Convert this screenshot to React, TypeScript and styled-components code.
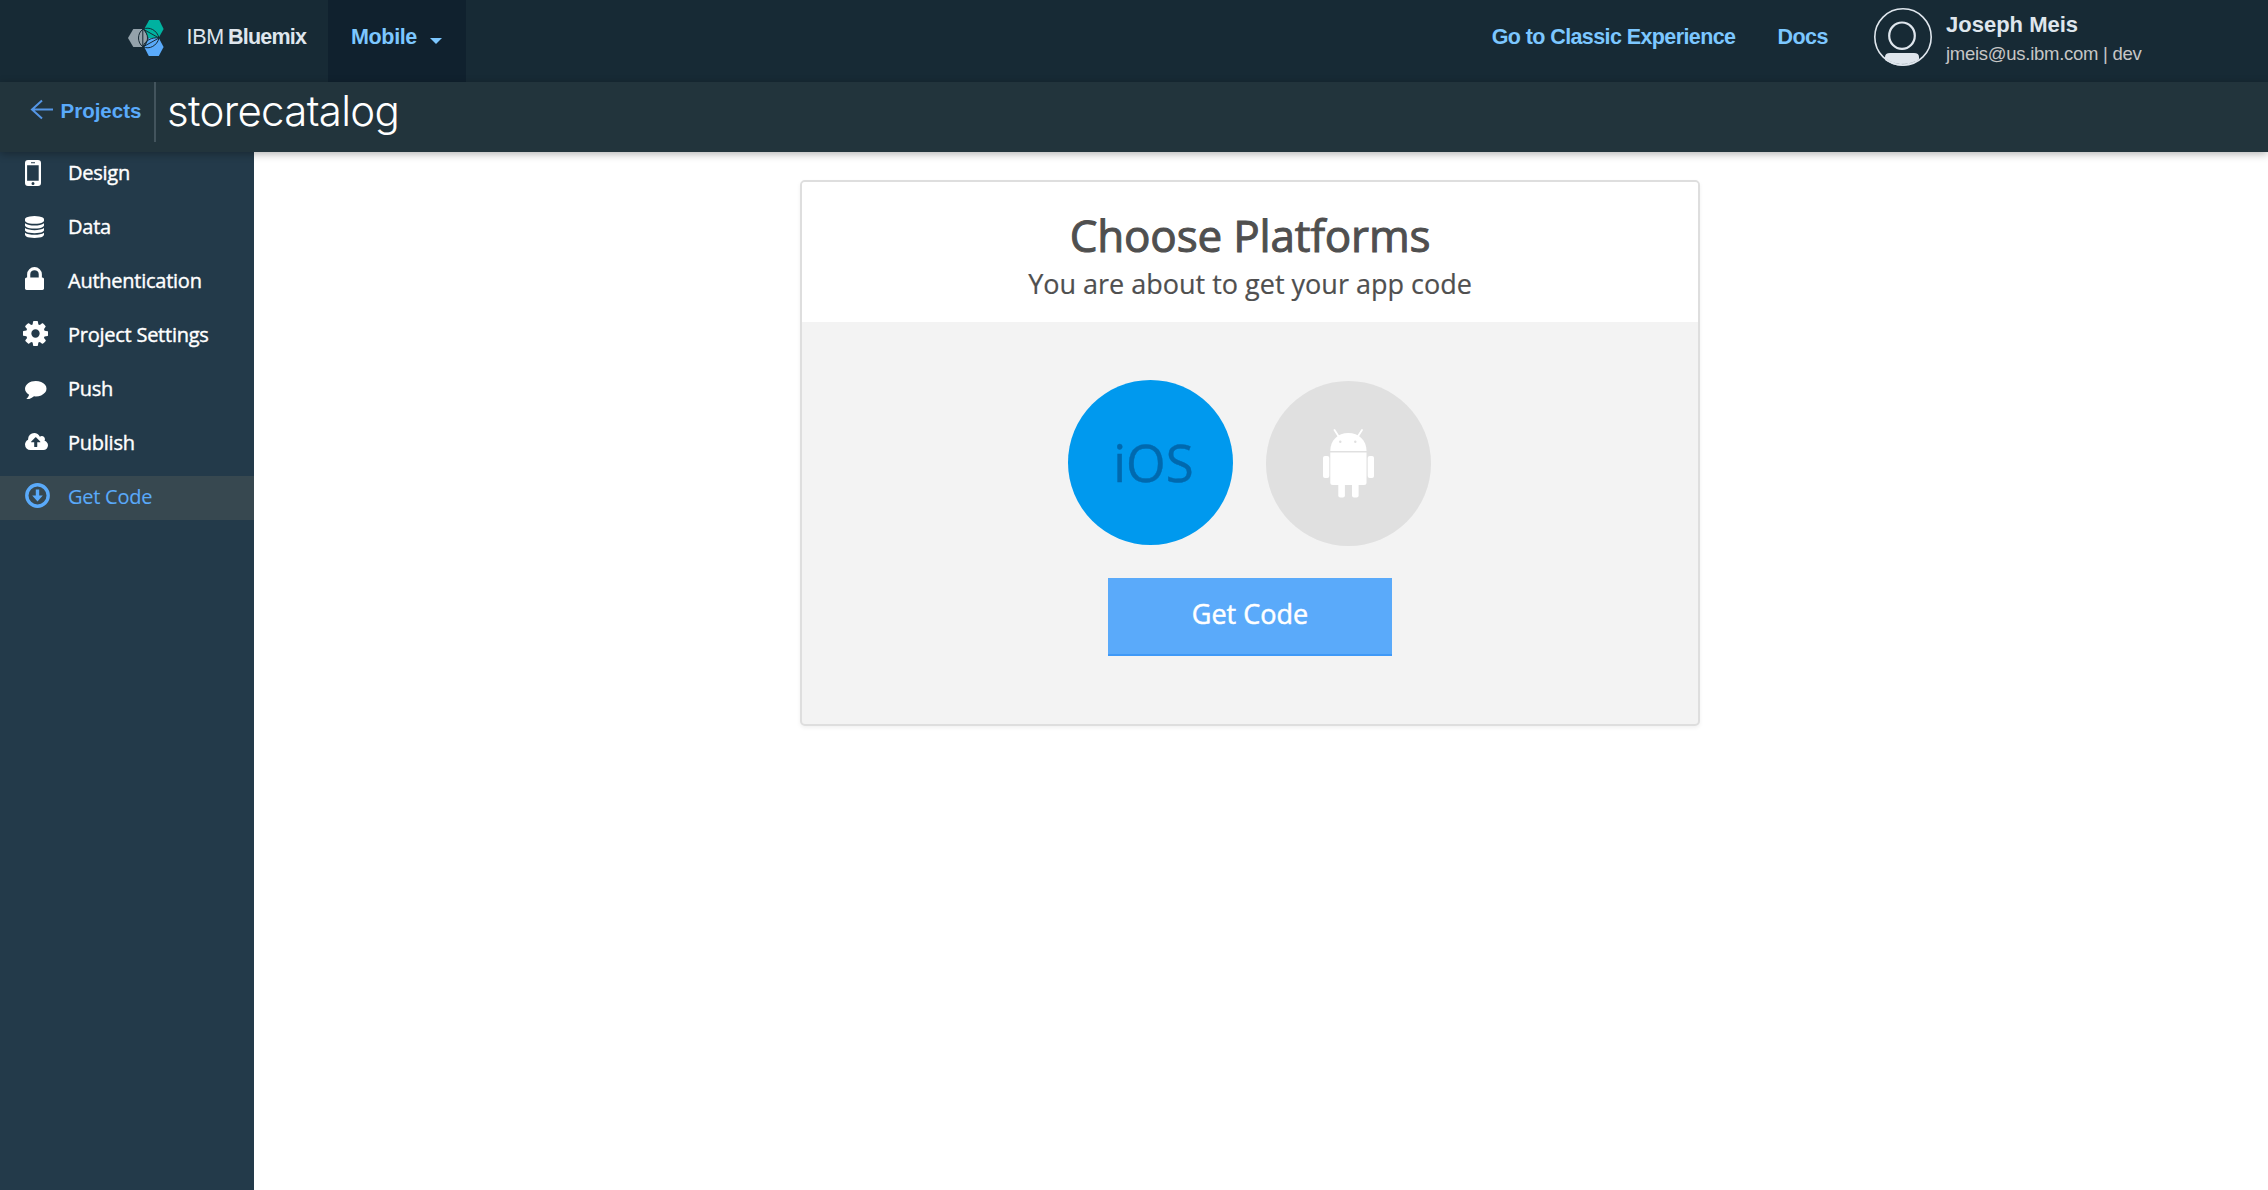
import React from "react";
import styled, { createGlobalStyle } from "styled-components";

const GlobalStyle = createGlobalStyle`
  *, *::before, *::after { box-sizing: border-box; }
  body { margin: 0; background: #fff; }
`;

const HELVETICA = `"Helvetica Neue", "Liberation Sans", Arial, sans-serif`;
const OPEN_SANS = `"Open Sans", sans-serif`;

const Page = styled.div`
  display: flex;
  flex-direction: column;
  height: 1190px;
  overflow: hidden;
  font-family: ${OPEN_SANS};
`;

const TopBar = styled.header`
  display: flex;
  align-items: flex-start;
  height: 82px;
  padding-left: 128px;
  background: #172a35;
  font-family: ${HELVETICA};
  font-size: 21.5px;
  line-height: 74px;
  white-space: nowrap;
`;

const LogoMark = styled.svg`
  display: block;
  flex: none;
  width: 36px;
  height: 36px;
  margin-top: 20px;
`;

const Brand = styled.div`
  display: flex;
  width: 164px;
  padding-left: 22.5px;
  color: #dfe6ed;
`;

const BrandPrefix = styled.span`
  width: 41.5px;
  letter-spacing: -0.3px;
`;

const BrandName = styled.b`
  letter-spacing: -0.8px;
`;

const CategoryTab = styled.div`
  display: flex;
  width: 138px;
  height: 82px;
  padding-left: 23px;
  background: #10212e;
  color: #7cc7ff;
  font-weight: bold;
  letter-spacing: -0.35px;
`;

const Caret = styled.span`
  width: 0;
  height: 0;
  margin: 38px 0 0 13px;
  border: 6px solid transparent;
  border-top-color: #7cc7ff;
  border-bottom: 0;
`;

const TopLinks = styled.nav`
  display: flex;
  gap: 42px;
  margin-left: auto;
`;

const TopLink = styled.a<{ $spacing: number }>`
  color: #7cc7ff;
  font-weight: bold;
  letter-spacing: ${(p) => p.$spacing}px;
`;

const Account = styled.div`
  display: flex;
  width: 395px;
  margin-left: 45px;
`;

const Avatar = styled.svg`
  display: block;
  flex: none;
  width: 60px;
  height: 60px;
  margin-top: 7px;
`;

const AccountText = styled.div`
  display: flex;
  flex-direction: column;
  padding: 10px 0 0 13px;
`;

const UserName = styled.b`
  color: #dfe6ed;
  font-size: 22px;
  line-height: 29px;
`;

const UserMail = styled.span`
  color: #c6c6c6;
  font-size: 18.5px;
  line-height: 30px;
  letter-spacing: -0.27px;
`;

const ProjectBar = styled.div`
  position: relative;
  z-index: 1;
  display: flex;
  flex: none;
  align-items: flex-start;
  height: 70px;
  background: #22343c;
  box-shadow: 0 2px 8px rgba(0, 0, 0, 0.3);
`;

const BackLink = styled.a`
  display: flex;
  width: 156px;
  height: 60px;
  padding-left: 30px;
  border-right: 2px solid #43545d;
  color: #5aaafa;
  font-family: ${HELVETICA};
  font-size: 20.5px;
  font-weight: bold;
  line-height: 58px;
`;

const BackArrow = styled.svg`
  display: block;
  width: 24px;
  height: 22px;
  margin: 17px 6.5px 0 0;
`;

const ProjectTitle = styled.h1`
  margin: 0;
  padding-left: 11px;
  color: #fff;
  font-family: Inter, ${HELVETICA};
  font-size: 42px;
  font-weight: 300;
  letter-spacing: -0.68px;
  line-height: 58px;
`;

const Body = styled.div`
  display: flex;
  flex: 1;
  min-height: 0;
`;

const Sidebar = styled.nav`
  display: flex;
  flex: none;
  flex-direction: column;
  gap: 10px;
  width: 254px;
  background: #233a4a;
`;

const NavItem = styled.a<{ $active?: boolean }>`
  display: flex;
  align-items: flex-start;
  height: 44px;
  background: ${(p) => (p.$active ? "#374850" : "transparent")};
  color: ${(p) => (p.$active ? "#5aaafa" : "#fff")};
`;

const NavIcon = styled.span<{ $top: number; $left: number }>`
  display: block;
  flex: none;
  width: 68px;
  padding: ${(p) => p.$top}px 0 0 ${(p) => p.$left}px;

  svg { display: block; }
`;

const NavLabel = styled.span<{ $active?: boolean }>`
  font-size: 20px;
  letter-spacing: -0.25px;
  line-height: 42px;
  white-space: nowrap;
  -webkit-text-stroke: ${(p) => (p.$active ? 0.1 : 0.4)}px currentColor;
`;

const Main = styled.main`
  display: flex;
  flex: 1;
  align-items: flex-start;
  justify-content: center;
  padding: 28px 22px 0 0;
`;

const Card = styled.section`
  width: 900px;
  height: 546px;
  overflow: hidden;
  border: 2px solid #dedede;
  border-radius: 5px;
  background: #f3f3f3;
  box-shadow: 0 2px 4px rgba(0, 0, 0, 0.06);
`;

const CardHeader = styled.header`
  height: 140px;
  padding-top: 22px;
  background: #fff;
  color: #4f4f4f;
  text-align: center;
`;

const CardTitle = styled.h2`
  margin: 0;
  font-size: 44px;
  font-weight: 400;
  letter-spacing: -0.18px;
  line-height: 62px;
  -webkit-text-stroke: 1px currentColor;
`;

const CardSubtitle = styled.p`
  margin: 0;
  font-size: 27px;
  line-height: 35px;
  -webkit-text-stroke: 0.2px currentColor;
`;

const CardBody = styled.div`
  display: flex;
  flex-direction: column;
  align-items: center;
  padding-top: 58px;
`;

const Platforms = styled.div`
  display: flex;
  gap: 33px;
  padding-right: 2px;
`;

const Platform = styled.button<{ $selected?: boolean }>`
  display: flex;
  align-items: center;
  justify-content: center;
  width: 165px;
  height: 165px;
  margin-top: ${(p) => (p.$selected ? 0 : 1)}px;
  padding: 0 0 0 ${(p) => (p.$selected ? 7 : 0)}px;
  border: 0;
  border-radius: 50%;
  background: ${(p) => (p.$selected ? "#0099ee" : "#e0e0e0")};
  color: #0069ae;
  font-family: ${OPEN_SANS};
  font-size: 51px;
  line-height: 69px;
  -webkit-text-stroke: 0.4px currentColor;
`;

const GetCodeButton = styled.button`
  width: 284px;
  height: 78px;
  margin-top: 32px;
  padding: 0 0 5px;
  border: 0;
  border-bottom: 2px solid #3f99f7;
  background: #5aaafa;
  color: #fff;
  font-family: ${OPEN_SANS};
  font-size: 27px;
  line-height: 36px;
  -webkit-text-stroke: 0.5px currentColor;
`;

type GlyphProps = { box: string; w: number; h: number; d: string };

/* Font glyph outlines have an upward y axis, hence the flip. */
const Glyph = ({ box, w, h, d }: GlyphProps) => (
  <svg width={w} height={h} viewBox={box} preserveAspectRatio="none" fill="currentColor">
    <path transform="scale(1 -1)" d={d} />
  </svg>
);

const PhoneIcon = () => (
  <svg width="16" height="26" viewBox="0 0 16 26" fill="currentColor">
    <path
      fillRule="evenodd"
      d="M3 0h10a3 3 0 0 1 3 3v20a3 3 0 0 1-3 3H3a3 3 0 0 1-3-3V3a3 3 0 0 1 3-3zM2.1 5.2v15.6h11.6V5.2zM6 2.2v1.1h4V2.2zM8 21.9a1.5 1.5 0 1 0 0 3 1.5 1.5 0 1 0 0-3z"
    />
  </svg>
);

const DownloadIcon = () => (
  <svg width="25" height="25" viewBox="0 0 25 25" fill="none">
    <circle cx="12.5" cy="12.5" r="10.7" stroke="currentColor" strokeWidth="3.4" />
    <path d="M10.8 6.6h3.4v6h3.6l-5.3 5.8-5.3-5.8h3.6z" fill="currentColor" />
  </svg>
);

const DatabaseIcon = () => (
  <Glyph
    box="0 -1536 1536 1792"
    w={19}
    h={22}
    d="M768 768q237 0 443 43t325 127v-170q0 -69 -103 -128t-280 -93.5t-385 -34.5t-385 34.5t-280 93.5t-103 128v170q119 -84 325 -127t443 -43zM768 0q237 0 443 43t325 127v-170q0 -69 -103 -128t-280 -93.5t-385 -34.5t-385 34.5t-280 93.5t-103 128v170q119 -84 325 -127t443 -43zM768 384q237 0 443 43t325 127v-170q0 -69 -103 -128t-280 -93.5t-385 -34.5t-385 34.5t-280 93.5t-103 128v170q119 -84 325 -127t443 -43zM768 1536q208 0 385 -34.5t280 -93.5t103 -128v-128q0 -69 -103 -128t-280 -93.5t-385 -34.5t-385 34.5t-280 93.5t-103 128v128q0 69 103 128t280 93.5t385 34.5z"
  />
);

const LockIcon = () => (
  <Glyph
    box="0 -1408 1152 1408"
    w={19}
    h={23}
    d="M320 768h512v192q0 106 -75 181t-181 75t-181 -75t-75 -181v-192zM1152 672v-576q0 -40 -28 -68t-68 -28h-960q-40 0 -68 28t-28 68v576q0 40 28 68t68 28h32v192q0 184 132 316t316 132t316 -132t132 -316v-192h32q40 0 68 -28t28 -68z"
  />
);

const CogIcon = () => (
  <Glyph
    box="0 -1408 1536 1536"
    w={25}
    h={25}
    d="M1024 640q0 106 -75 181t-181 75t-181 -75t-75 -181t75 -181t181 -75t181 75t75 181zM1536 749v-222q0 -12 -8 -23t-20 -13l-185 -28q-19 -54 -39 -91q35 -50 107 -138q10 -12 10 -25t-9 -23q-27 -37 -99 -108t-94 -71q-12 0 -26 9l-138 108q-44 -23 -91 -38q-16 -136 -29 -186q-7 -28 -36 -28h-222q-14 0 -24.5 8.5t-11.5 21.5l-28 184q-49 16 -90 37l-141 -107q-10 -9 -25 -9q-14 0 -25 11q-126 114 -165 168q-7 10 -7 23q0 12 8 23q15 21 51 66.5t54 70.5q-27 50 -41 99l-183 27q-13 2 -21 12.5t-8 23.5v222q0 12 8 23t19 13l186 28q14 46 39 92q-40 57 -107 138q-10 12 -10 24q0 10 9 23q26 36 98.5 107.5t94.5 71.5q13 0 26 -10l138 -107q44 23 91 38q16 136 29 186q7 28 36 28h222q14 0 24.5 -8.5t11.5 -21.5l28 -184q49 -16 90 -37l142 107q9 9 24 9q13 0 25 -10q129 -119 165 -170q7 -8 7 -22q0 -12 -8 -23q-15 -21 -51 -66.5t-54 -70.5q26 -50 41 -98l183 -28q13 -2 21 -12.5t8 -23.5z"
  />
);

const CommentIcon = () => (
  <Glyph
    box="0 -1280 1792 1536"
    w={21.5}
    h={18.5}
    d="M1792 640q0 -174 -120 -321.5t-326 -233t-450 -85.5q-70 0 -145 8q-198 -175 -460 -242q-49 -14 -114 -22q-17 -2 -30.5 9t-17.5 29v1q-3 4 -0.5 12t2 10t4.5 9.5l6 9t7 8.5t8 9q7 8 31 34.5t34.5 38t31 39.5t32.5 51t27 59t26 76q-157 89 -247.5 220t-90.5 281q0 130 71 248.5t191 204.5t286 136.5t348 50.5q244 0 450 -85.5t326 -233t120 -321.5z"
  />
);

const CloudIcon = () => (
  <Glyph
    box="0 -1408 1920 1408"
    w={23}
    h={17}
    d="M1280 672q0 14 -9 23l-352 352q-9 9 -23 9t-23 -9l-351 -351q-10 -12 -10 -24q0 -14 9 -23t23 -9h224v-352q0 -13 9.5 -22.5t22.5 -9.5h192q13 0 22.5 9.5t9.5 22.5v352h224q13 0 22.5 9.5t9.5 22.5zM1920 384q0 -159 -112.5 -271.5t-271.5 -112.5h-1088q-185 0 -316.5 131.5t-131.5 316.5q0 130 70 240t188 165q-2 30 -2 43q0 212 150 362t362 150q156 0 285.5 -87t188.5 -231q71 62 166 62q106 0 181 -75t75 -181q0 -76 -41 -138q130 -31 213.5 -135.5t83.5 -238.5z"
  />
);

const NAV = [
  { label: "Design", icon: <PhoneIcon />, top: 8, left: 25 },
  { label: "Data", icon: <DatabaseIcon />, top: 9.5, left: 25 },
  { label: "Authentication", icon: <LockIcon />, top: 7, left: 25 },
  { label: "Project Settings", icon: <CogIcon />, top: 7.2, left: 23.4 },
  { label: "Push", icon: <CommentIcon />, top: 12.5, left: 25 },
  { label: "Publish", icon: <CloudIcon />, top: 11, left: 25 },
  { label: "Get Code", icon: <DownloadIcon />, top: 7.2, left: 25, active: true },
];

const BluemixLogo = () => (
  <LogoMark viewBox="0 0 36 36" fill="none">
    <path d="M0 18l5.3-9h10l5.2 9-5.2 9h-10z" fill="#94a2ab" />
    <path d="M16.2 9l5-9h10l4.4 9-5 9h-10z" fill="#00b2a0" />
    <path d="M16.2 27l4.6-9h10l4.8 9-4.8 9h-10z" fill="#5aaafa" />
    <g stroke="#172a35" strokeWidth="1">
      <path d="M14.8 9.2v17.6" />
      <path d="M15 9.2c-6 4-6 13.6 0 17.6" />
      <path d="M15 9.2c6 4 6 13.6 0 17.6" />
      <path d="M15.2 9.2c6-3 14 1 15.8 8.8" />
      <path d="M15.2 9.2L31 18" />
      <path d="M15.2 26.8c6 3 14-1 15.8-8.8" />
      <path d="M15.2 26.8L31 18" />
      <path d="M15.2 26.8c1-6 9-10 15.8-8.8" />
    </g>
  </LogoMark>
);

const UserAvatar = () => (
  <Avatar viewBox="0 0 60 60" fill="none">
    <path d="M12 53v-3q0-4 5-4h24q5 0 5 4v3a28.5 28.5 0 0 1-34 0z" fill="#dfe6ed" />
    <path
      d="M13.5 52.5c9 6.5 23 6.5 32.5 0"
      stroke="#172a35"
      strokeOpacity=".5"
      strokeWidth=".7"
      strokeDasharray="6 2"
    />
    <circle cx="30" cy="30" r="28.2" stroke="#dfe6ed" strokeWidth="1.6" />
    <ellipse cx="29" cy="28.7" rx="12.8" ry="13.2" fill="#172a35" stroke="#dfe6ed" strokeWidth="2.2" />
  </Avatar>
);

const AndroidIcon = () => (
  <svg width="51" height="69" viewBox="0 0 51 69" fill="#fff">
    <path d="M11.5 1l4.5 7M39 1l-4.5 7" stroke="#fff" strokeWidth="1.8" strokeLinecap="round" />
    <path d="M7.3 22C7.3 11 15 4 25.3 4s18.2 7 18.2 18z" />
    <path d="M7.3 23.4h36.2v30.1a2.5 2.5 0 0 1-2.5 2.5H9.8a2.5 2.5 0 0 1-2.5-2.5z" />
    <rect x="0" y="27" width="6.3" height="22" rx="2" />
    <rect x="44.7" y="27" width="6.3" height="22" rx="2" />
    <rect x="15.3" y="53" width="6.6" height="15.5" rx="2" />
    <rect x="29" y="53" width="6.6" height="15.5" rx="2" />
    <circle cx="17.3" cy="12.8" r="1.2" fill="#e0e0e0" />
    <circle cx="32.3" cy="12.8" r="1.2" fill="#e0e0e0" />
  </svg>
);

export default function App() {
  return (
    <Page>
      <GlobalStyle />
      <TopBar>
        <BluemixLogo />
        <Brand>
          <BrandPrefix>IBM</BrandPrefix>
          <BrandName>Bluemix</BrandName>
        </Brand>
        <CategoryTab>
          Mobile
          <Caret />
        </CategoryTab>
        <TopLinks>
          <TopLink $spacing={-0.6}>Go to Classic Experience</TopLink>
          <TopLink $spacing={-0.5}>Docs</TopLink>
        </TopLinks>
        <Account>
          <UserAvatar />
          <AccountText>
            <UserName>Joseph Meis</UserName>
            <UserMail>jmeis@us.ibm.com | dev</UserMail>
          </AccountText>
        </Account>
      </TopBar>
      <ProjectBar>
        <BackLink>
          <BackArrow viewBox="0 0 24 22" fill="none" stroke="#5596e6" strokeWidth="2">
            <path d="M23 10.5H2M12 1.5l-10 9 10 9" />
          </BackArrow>
          Projects
        </BackLink>
        <ProjectTitle>storecatalog</ProjectTitle>
      </ProjectBar>
      <Body>
        <Sidebar>
          {NAV.map((item) => (
            <NavItem key={item.label} $active={item.active}>
              <NavIcon $top={item.top} $left={item.left}>
                {item.icon}
              </NavIcon>
              <NavLabel $active={item.active}>{item.label}</NavLabel>
            </NavItem>
          ))}
        </Sidebar>
        <Main>
          <Card>
            <CardHeader>
              <CardTitle>Choose Platforms</CardTitle>
              <CardSubtitle>You are about to get your app code</CardSubtitle>
            </CardHeader>
            <CardBody>
              <Platforms>
                <Platform $selected>iOS</Platform>
                <Platform>
                  <AndroidIcon />
                </Platform>
              </Platforms>
              <GetCodeButton>Get Code</GetCodeButton>
            </CardBody>
          </Card>
        </Main>
      </Body>
    </Page>
  );
}
